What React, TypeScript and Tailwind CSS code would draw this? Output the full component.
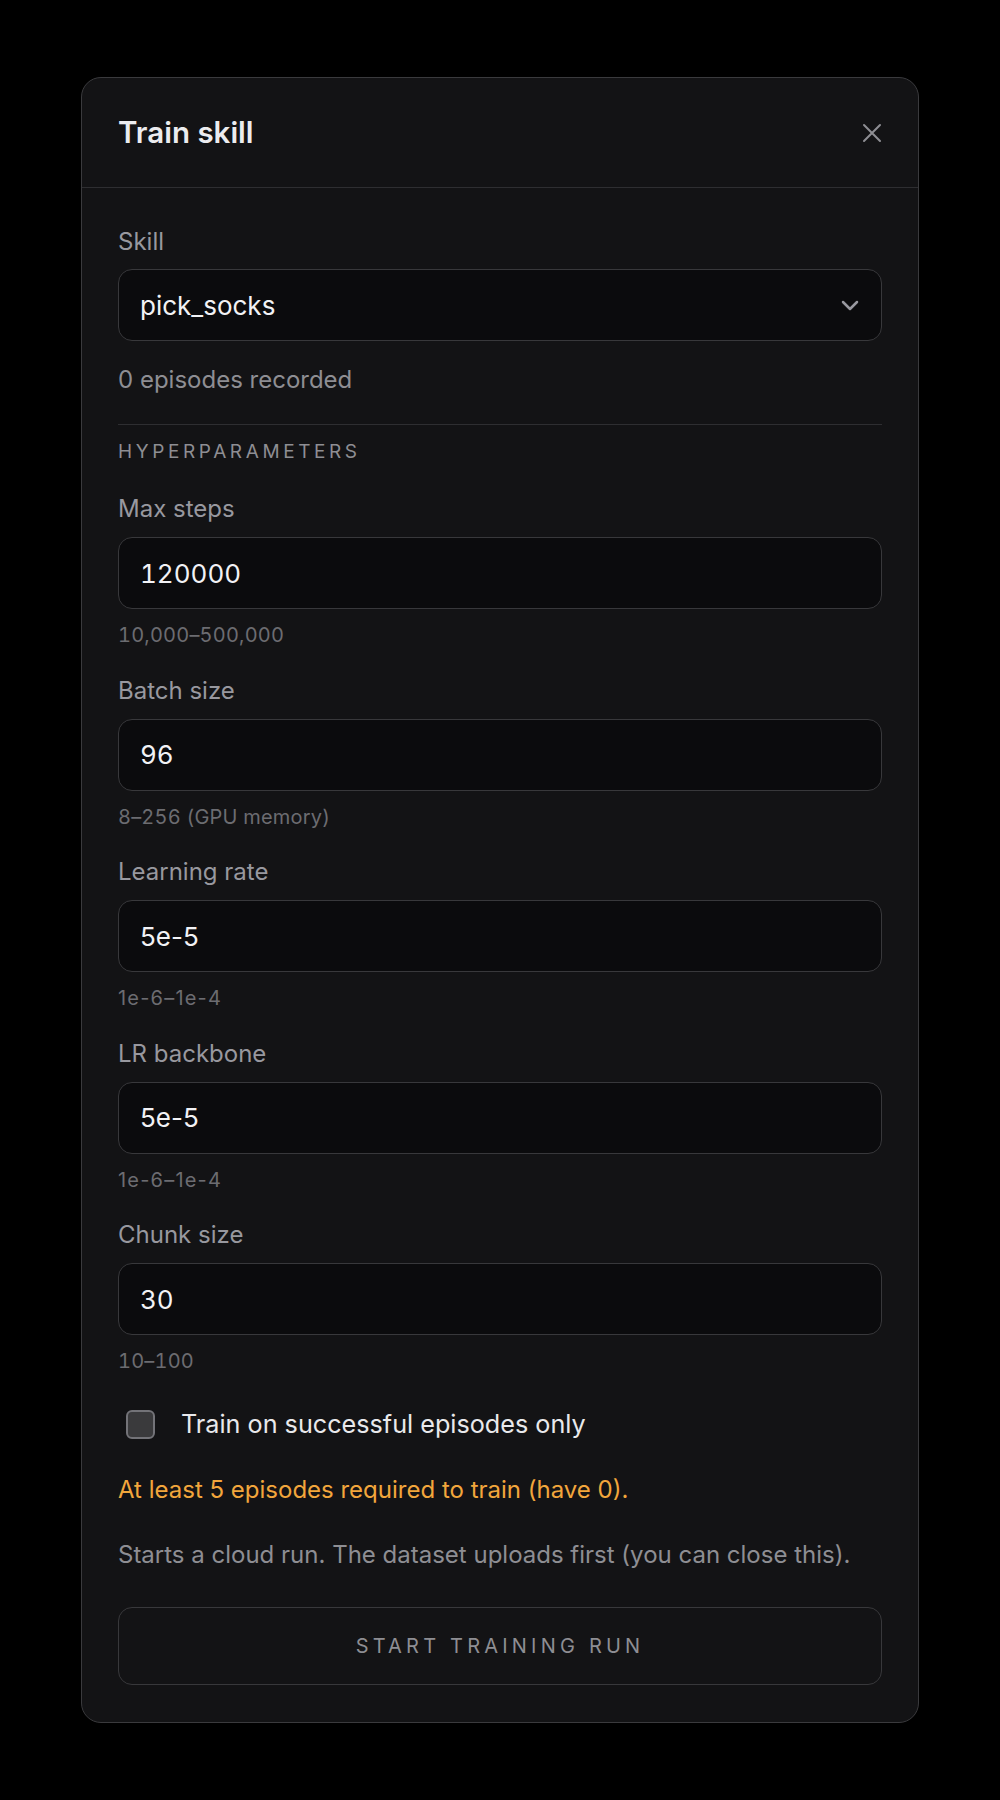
import { useState } from 'react';

const fields = [
  { label: 'Max steps', value: '120000', hint: '10,000–500,000', tnum: true },
  { label: 'Batch size', value: '96', hint: '8–256 (GPU memory)', tnum: true },
  { label: 'Learning rate', value: '5e-5', hint: '1e-6–1e-4', tnum: false },
  { label: 'LR backbone', value: '5e-5', hint: '1e-6–1e-4', tnum: false },
  { label: 'Chunk size', value: '30', hint: '10–100', tnum: true },
];

function Field({ label, value, hint, tnum }: { label: string; value: string; hint: string; tnum: boolean }) {
  return (
    <div className="flex flex-col">
      <div className="text-[24px] leading-[32px] text-[#98989f]">{label}</div>
      <div className="mt-3 h-[72px] rounded-[14px] border border-[#38383b] bg-[#0b0b0d] px-[21px] flex items-center">
        <span className={tnum ? 'text-[26px] tabular-nums text-[#f2f2f5]' : 'text-[26px] text-[#f2f2f5]'}>{value}</span>
      </div>
      <div
        className={
          tnum
            ? 'mt-3 text-[20px] leading-[28px] tracking-[0.2px] tabular-nums text-[#6c6c71]'
            : 'mt-3 text-[20px] leading-[28px] tracking-[1.2px] text-[#6c6c71]'
        }
      >
        {hint}
      </div>
    </div>
  );
}

export default function App() {
  const [successOnly, setSuccessOnly] = useState(false);

  return (
    <div
      className="min-h-[1800px] bg-black pt-[77px]"
      style={{ fontFamily: 'Inter, "Noto Sans", sans-serif' }}
    >
      <div className="mx-auto w-[838px] rounded-[20px] border border-[#3a3a3d] bg-[#131315]">
        {/* Header */}
        <div className="h-[110px] border-b border-[#2e2e31] px-9 flex items-center justify-between">
          <h1 className="text-[29.5px] font-semibold text-[#ececef]">Train skill</h1>
          <svg width="20" height="20" viewBox="0 0 20 20" className="text-[#8e8e93]">
            <path d="M2 2L18 18M18 2L2 18" stroke="currentColor" strokeWidth="2" strokeLinecap="round" />
          </svg>
        </div>

        {/* Body */}
        <div className="px-9 pt-[38px] pb-[37px] flex flex-col">
          <div className="text-[24px] leading-[32px] text-[#98989f]">Skill</div>
          <div className="mt-[11px] h-[72px] rounded-[14px] border border-[#38383b] bg-[#0b0b0d] pl-[21px] pr-[22px] flex items-center justify-between">
            <span className="text-[26px] text-[#f2f2f5]">pick_socks</span>
            <svg width="18" height="11" viewBox="0 0 18 11" className="text-[#98989f]">
              <path d="M2 2L9 9L16 2" fill="none" stroke="currentColor" strokeWidth="2.5" strokeLinecap="round" strokeLinejoin="round" />
            </svg>
          </div>
          <div className="mt-[23px] text-[24px] leading-[32px] text-[#8e8e93]">0 episodes recorded</div>

          <div className="mt-7 h-px bg-[#2e2e31]" />
          <div className="mt-[15px] text-[19px] leading-[24px] tracking-[3.6px] text-[#8e8e93]">HYPERPARAMETERS</div>

          <div className="mt-[29px] flex flex-col gap-[25.5px]">
            {fields.map((f) => (
              <Field key={f.label} {...f} />
            ))}
          </div>

          <label className="mt-[35px] h-[29px] pl-2 flex items-center gap-[26px] cursor-pointer">
            <input
              type="checkbox"
              checked={successOnly}
              onChange={(e) => setSuccessOnly(e.target.checked)}
              className="appearance-none w-[29px] h-[29px] rounded-[6px] border-2 border-[#737378] bg-[#3a3a3c]"
            />
            <span className="text-[25.2px] text-[#e9e9ec]">Train on successful episodes only</span>
          </label>

          <div className="mt-[35px] text-[24px] leading-[32px] text-[#f2a63c]">
            At least 5 episodes required to train (have 0).
          </div>
          <div className="mt-[33px] text-[24px] leading-[32px] text-[#8e8e93]">
            Starts a cloud run. The dataset uploads first (you can close this).
          </div>

          <button className="mt-9 h-[78px] rounded-[14px] border border-[#38383b] bg-transparent text-[20px] tracking-[4.2px] text-[#8e8e93]">
            START TRAINING RUN
          </button>
        </div>
      </div>
    </div>
  );
}
